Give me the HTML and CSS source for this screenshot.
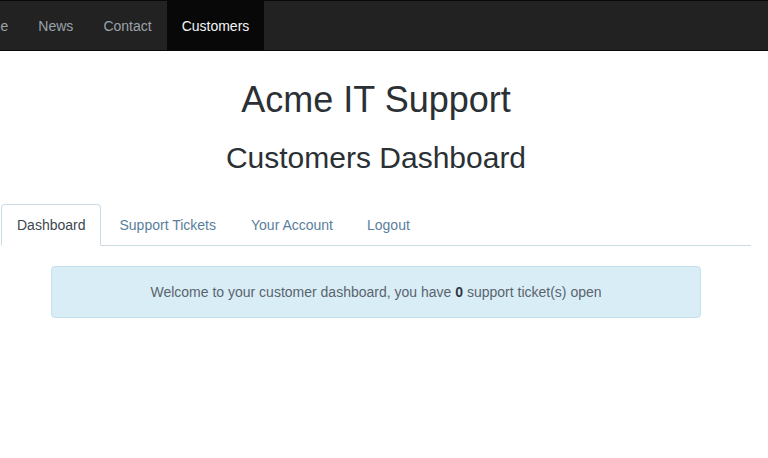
FILE: index.html
```html
<!DOCTYPE html>
<html>
<head>
<meta charset="utf-8">
<link rel="stylesheet" href="styles.css">
</head>
<body>
<nav class="navbar">
  <ul class="nav-links">
    <li><a href="#">Home</a></li>
    <li><a href="#">News</a></li>
    <li><a href="#">Contact</a></li>
    <li class="active"><a href="#">Customers</a></li>
  </ul>
</nav>
<main class="page">
  <h1 class="title">Acme IT Support</h1>
  <h2 class="subtitle">Customers Dashboard</h2>
  <ul class="tabs">
    <li class="tab active"><a href="#">Dashboard</a></li>
    <li class="tab wide"><a href="#">Support Tickets</a></li>
    <li class="tab"><a href="#">Your Account</a></li>
    <li class="tab"><a href="#">Logout</a></li>
  </ul>
  <div class="alert">Welcome to your customer dashboard, you have <b>0</b> support ticket(s) open</div>
</main>
</body>
</html>
```

FILE: styles.css
```css
html, body {
  margin: 0;
  padding: 0;
  background: #fff;
  overflow: hidden;
}
body {
  font-family: "Liberation Sans", Arial, sans-serif;
  font-size: 14px;
  line-height: 20px;
  color: #333;
}
.navbar {
  background: #222;
  border-top: 1px solid #080808;
  border-bottom: 1px solid #080808;
  height: 49px;
}
.nav-links {
  list-style: none;
  margin: 0 0 0 -44px;
  padding: 0;
  display: flex;
  height: 49px;
}
.nav-links li a {
  display: block;
  padding: 1px 15px 0;
  line-height: 48px;
  color: #9aa2aa;
  text-decoration: none;
}
.nav-links li.active a {
  background: #080808;
  color: #f2f6f8;
}
.page {
  width: 750px;
  margin-left: 1px;
}
.title {
  margin: 29px 0 0;
  font-size: 36px;
  line-height: 39.6px;
  font-weight: 500;
  text-align: center;
  color: #2b3035;
}
.subtitle {
  margin: 21px 0 0;
  font-size: 30px;
  line-height: 33px;
  font-weight: 500;
  text-align: center;
  color: #2b3035;
}
.tabs {
  list-style: none;
  margin: 30px 0 0;
  padding: 0;
  display: flex;
  border-bottom: 1px solid #cbd9e2;
}
.tab {
  margin-right: 2px;
  margin-bottom: -1px;
}
.tab a {
  display: block;
  padding: 10px 15px;
  border: 1px solid transparent;
  border-radius: 4px 4px 0 0;
  color: #5a7e9c;
  text-decoration: none;
}
.tab.active a {
  padding-right: 14px;
  color: #3c4650;
  background: #fff;
  border-color: #cadde7 #cadde7 transparent;
}
.tab.wide a {
  padding-left: 16px;
  padding-right: 16px;
}
.alert {
  margin: 20px 50px 0;
  padding: 15px;
  background: #d9edf7;
  border: 1px solid #c3e0ec;
  border-radius: 4px;
  text-align: center;
  color: #5a646d;
}
.alert b {
  color: #2f3840;
}
```
